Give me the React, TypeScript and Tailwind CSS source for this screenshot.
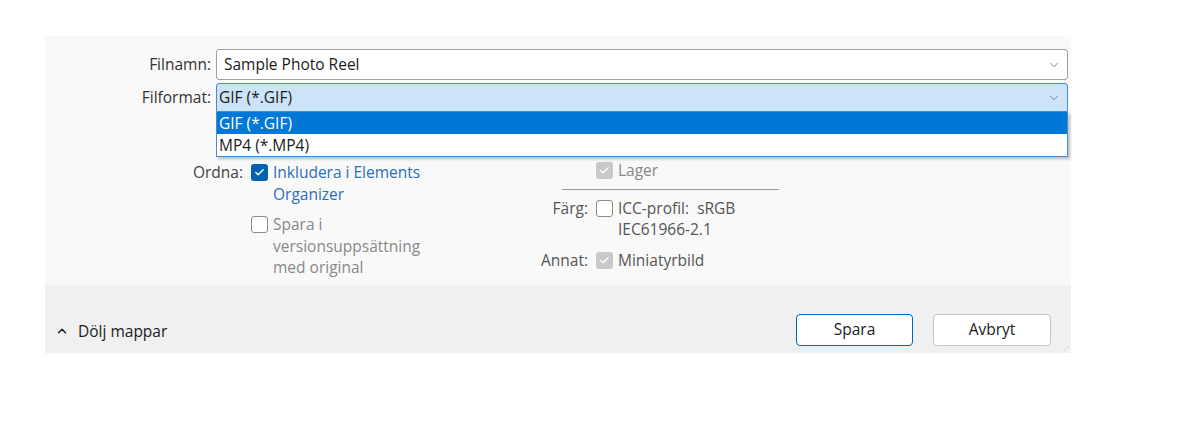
import { ChevronDown, ChevronUp, Check } from "lucide-react";

const font = { fontFamily: '"Open Sans", "Noto Sans", sans-serif' };

const Box = ({ state }: { state: "on" | "off" | "dim" }) => {
  if (state === "on")
    return (
      <span className="mt-[2px] flex h-[17px] w-[17px] shrink-0 items-center justify-center rounded-[3px] bg-[#0063b1]">
        <Check className="h-[11px] w-[11px] text-white" strokeWidth={3} />
      </span>
    );
  if (state === "dim")
    return (
      <span className="mt-[2px] flex h-[17px] w-[17px] shrink-0 items-center justify-center rounded-[3px] bg-[#c9c9c9]">
        <Check className="h-[11px] w-[11px] text-white" strokeWidth={3} />
      </span>
    );
  return <span className="mt-[2px] h-[17px] w-[17px] shrink-0 rounded-[3px] border border-[#8c8c8c] bg-white" />;
};

export default function App() {
  return (
    <div className="min-h-[426px] bg-white pt-[36px] text-[15.5px]" style={font}>
      <div className="ml-[45px] w-[1026px]">
        {/* top */}
        <div className="relative h-[249px] bg-[#f9f9f9] pt-[13px]">
          <div className="flex items-center">
            <label className="w-[171px] pr-[5px] text-right text-[#333]">Filnamn:</label>
            <div className="mr-[3px] flex h-[31px] flex-1 items-center justify-between rounded-[3px] border border-[#a0a0a0] bg-white pl-[7px] pr-[6px] text-[#1b1b1b]">
              <span>Sample Photo Reel</span>
              <ChevronDown className="h-[14px] w-[14px] text-[#777]" strokeWidth={1.5} />
            </div>
          </div>
          <div className="mt-[3px] flex items-center">
            <label className="w-[171px] pr-[5px] text-right text-[#333]">Filformat:</label>
            <div className="relative mr-[3px] flex-1">
              <div className="flex h-[29px] items-center justify-between rounded-t-[3px] border border-[#4a8ad0] bg-[#cce4f7] pl-[2px] pr-[6px] text-[#1b1b1b]">
                <span>GIF (*.GIF)</span>
                <ChevronDown className="h-[14px] w-[14px] text-[#777]" strokeWidth={1.5} />
              </div>
              <div className="absolute left-0 right-0 top-[29px] z-10 border border-t-0 border-[#4a8ad0] bg-white shadow-[2px_2px_3px_rgba(0,0,0,0.25)]">
                <div className="h-[22px] bg-[#0078d7] pl-[2px] leading-[22px] text-white">GIF (*.GIF)</div>
                <div className="h-[22px] pl-[2px] leading-[22px] text-[#1b1b1b]">MP4 (*.MP4)</div>
              </div>
            </div>
          </div>

          {/* options */}
          <div className="flex leading-[21.5px]">
            <div className="mt-[50px] w-[483px] text-[#444]">
              <div className="flex gap-[8px]">
                <span className="w-[198px] text-right">Ordna:</span>
                <div className="flex gap-[5px]">
                  <Box state="on" />
                  <span className="text-[#2a6ebd]">
                    Inkludera i Elements
                    <br />
                    Organizer
                  </span>
                </div>
              </div>
              <div className="mt-[9px] flex gap-[8px]">
                <span className="w-[198px]" />
                <div className="flex gap-[5px] text-[#888]">
                  <Box state="off" />
                  <span>
                    Spara i
                    <br />
                    versionsuppsättning
                    <br />
                    med original
                  </span>
                </div>
              </div>
            </div>
            <div className="mt-[48px] text-[#555]">
              <div className="flex gap-[8px]">
                <span className="w-[60px]" />
                <div className="flex gap-[5px] text-[#888]">
                  <Box state="dim" />
                  <span>Lager</span>
                </div>
              </div>
              <div className="ml-[34px] mt-[7px] h-px w-[217px] bg-[#9a9a9a]" />
              <div className="mt-[8px] flex gap-[8px]">
                <span className="w-[60px] text-right">Färg:</span>
                <div className="flex gap-[5px]">
                  <Box state="off" />
                  <span>
                    ICC-profil:&nbsp; sRGB
                    <br />
                    IEC61966-2.1
                  </span>
                </div>
              </div>
              <div className="mt-[9px] flex gap-[8px]">
                <span className="w-[60px] text-right">Annat:</span>
                <div className="flex gap-[5px]">
                  <Box state="dim" />
                  <span>Miniatyrbild</span>
                </div>
              </div>
            </div>
          </div>
        </div>

        {/* bottom */}
        <div className="relative flex h-[68px] items-end justify-between bg-[#f0f0f0] pb-[7px]">
          <div className="mb-[3px] flex items-center gap-[9px] pl-[10px] text-[#1b1b1b]">
            <ChevronUp className="h-[14px] w-[14px]" strokeWidth={2.5} />
            <span>Dölj mappar</span>
          </div>
          <div className="flex gap-[20px] pr-[20px]">
            <button className="h-[32px] w-[117px] rounded-[4px] border border-[#0067c0] bg-white text-[#1b1b1b]">
              Spara
            </button>
            <button className="h-[32px] w-[118px] rounded-[4px] border border-[#c4c4c4] bg-white text-[#1b1b1b]">
              Avbryt
            </button>
          </div>
          <div className="absolute bottom-[2px] right-[2px] text-[6px] leading-none text-[#999]">⋰</div>
        </div>
      </div>
    </div>
  );
}
